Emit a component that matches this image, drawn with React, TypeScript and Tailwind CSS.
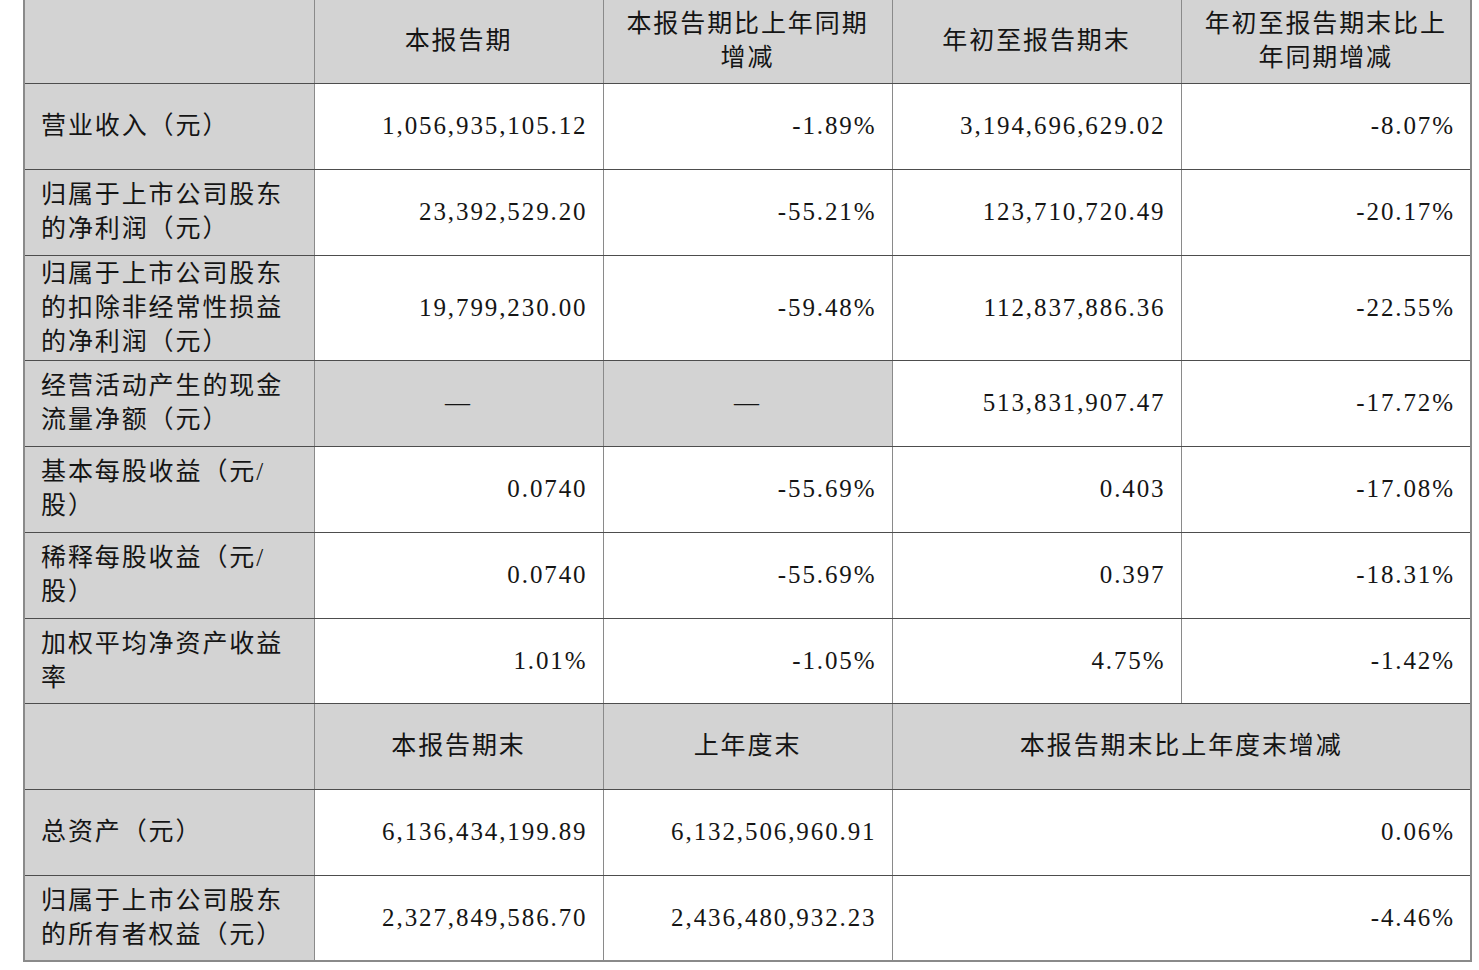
type Row = {
  label: string[];
  cells: string[];
  h: string;
  grayCells?: number[];
};

const topRows: Row[] = [
  { label: ["营业收入（元）"], cells: ["1,056,935,105.12", "-1.89%", "3,194,696,629.02", "-8.07%"], h: "h-[86px]" },
  { label: ["归属于上市公司股东", "的净利润（元）"], cells: ["23,392,529.20", "-55.21%", "123,710,720.49", "-20.17%"], h: "h-[86px]" },
  {
    label: ["归属于上市公司股东", "的扣除非经常性损益", "的净利润（元）"],
    cells: ["19,799,230.00", "-59.48%", "112,837,886.36", "-22.55%"],
    h: "h-[105px]",
  },
  { label: ["经营活动产生的现金", "流量净额（元）"], cells: ["—", "—", "513,831,907.47", "-17.72%"], h: "h-[86px]", grayCells: [0, 1] },
  { label: ["基本每股收益（元/", "股）"], cells: ["0.0740", "-55.69%", "0.403", "-17.08%"], h: "h-[86px]" },
  { label: ["稀释每股收益（元/", "股）"], cells: ["0.0740", "-55.69%", "0.397", "-18.31%"], h: "h-[86px]" },
  { label: ["加权平均净资产收益", "率"], cells: ["1.01%", "-1.05%", "4.75%", "-1.42%"], h: "h-[85px]" },
];

const bottomRows: Row[] = [
  { label: ["总资产（元）"], cells: ["6,136,434,199.89", "6,132,506,960.91", "0.06%"], h: "h-[86px]" },
  { label: ["归属于上市公司股东", "的所有者权益（元）"], cells: ["2,327,849,586.70", "2,436,480,932.23", "-4.46%"], h: "h-[86px]" },
];

const cellBase = "border-b border-r border-b-[#4d4d4d] border-r-[#8a8a8a] align-middle";
const gray = "bg-[#d3d3d3]";

function Lines({ lines }: { lines: string[] }) {
  return (
    <>
      {lines.map((l, i) => (
        <div key={i} className="whitespace-nowrap">
          {l}
        </div>
      ))}
    </>
  );
}

function LabelCell({ lines }: { lines: string[] }) {
  return (
    <td className={`${cellBase} ${gray} border-l-2 border-l-[#8a8a8a] pl-[16px] pr-2 text-left`}>
      <Lines lines={lines} />
    </td>
  );
}

function HeadCell({ lines, span }: { lines: string[]; span?: number }) {
  return (
    <td colSpan={span} className={`${cellBase} ${gray} px-2 text-center`}>
      <Lines lines={lines} />
    </td>
  );
}

export default function App() {
  return (
    <div className="min-h-[970px] w-[1479px] bg-white">
      <table
        className="ml-[23px] table-fixed border-collapse text-[25px] leading-[34px] tracking-[1.9px] text-[#151515]"
        style={{ fontFamily: '"Liberation Serif", "Noto Sans CJK SC", serif', width: 1447 }}
      >
        <colgroup>
          <col className="w-[290px]" />
          <col className="w-[289px]" />
          <col className="w-[289px]" />
          <col className="w-[289px]" />
          <col className="w-[290px]" />
        </colgroup>
        <tbody>
          <tr className="h-[83px]">
            <td className={`${cellBase} ${gray} border-l-2 border-l-[#8a8a8a]`} />
            <HeadCell lines={["本报告期"]} />
            <HeadCell lines={["本报告期比上年同期", "增减"]} />
            <HeadCell lines={["年初至报告期末"]} />
            <td className={`${cellBase} ${gray} border-r-2 px-2 text-center`}>
              <Lines lines={["年初至报告期末比上", "年同期增减"]} />
            </td>
          </tr>

          {topRows.map((row, i) => (
            <tr key={i} className={row.h}>
              <LabelCell lines={row.label} />
              {row.cells.map((c, j) => {
                const isGray = row.grayCells?.includes(j);
                const last = j === row.cells.length - 1;
                return (
                  <td
                    key={j}
                    className={`${cellBase} ${isGray ? `${gray} text-center` : "bg-white pr-[15px] text-right"} ${
                      last ? "border-r-2" : ""
                    } whitespace-nowrap`}
                  >
                    {c}
                  </td>
                );
              })}
            </tr>
          ))}

          <tr className="h-[86px]">
            <td className={`${cellBase} ${gray} border-l-2 border-l-[#8a8a8a]`} />
            <HeadCell lines={["本报告期末"]} />
            <HeadCell lines={["上年度末"]} />
            <td colSpan={2} className={`${cellBase} ${gray} border-r-2 px-2 text-center`}>
              <Lines lines={["本报告期末比上年度末增减"]} />
            </td>
          </tr>

          {bottomRows.map((row, i) => (
            <tr key={i} className={row.h}>
              <td
                className={`${cellBase} ${gray} border-l-2 border-l-[#8a8a8a] pl-[16px] pr-2 text-left ${
                  i === bottomRows.length - 1 ? "border-b-2 border-b-[#8a8a8a]" : ""
                }`}
              >
                <Lines lines={row.label} />
              </td>
              {row.cells.map((c, j) => {
                const last = j === row.cells.length - 1;
                return (
                  <td
                    key={j}
                    colSpan={last ? 2 : 1}
                    className={`${cellBase} bg-white pr-[15px] text-right whitespace-nowrap ${last ? "border-r-2" : ""} ${
                      i === bottomRows.length - 1 ? "border-b-2 border-b-[#8a8a8a]" : ""
                    }`}
                  >
                    {c}
                  </td>
                );
              })}
            </tr>
          ))}
        </tbody>
      </table>
    </div>
  );
}
